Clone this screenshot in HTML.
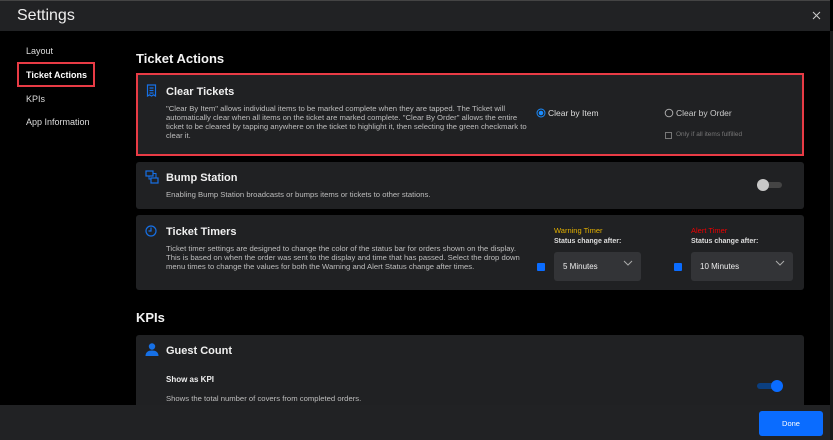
<!DOCTYPE html>
<html><head><meta charset="utf-8"><style>
*{margin:0;padding:0;box-sizing:border-box}
body{width:833px;height:440px;background:#000;font-family:"Liberation Sans",sans-serif;color:#e8e8e8;position:relative;overflow:hidden}
.abs{position:absolute}
.hdr{left:0;top:0;width:830px;height:31px;background:#212224;border-top:1px solid #444}
.hdr .t{left:17px;top:6px;font-size:16px;color:#eee}
.side{font-size:9px;color:#ddd}
.card{background:#202123;border-radius:3px;left:136px;width:668px}
h3{font-size:11px;font-weight:bold;color:#f0f0f0}
.desc{font-size:7.7px;line-height:9px;color:#bdbdbd;white-space:nowrap}
.sel{background:#333437;border-radius:3px;height:29px;font-size:8px;color:#eee;padding:10px 0 0 9px}
.chev{position:absolute;right:8px;top:8px}
.cb{width:8px;height:8px;background:#0a6cff;border-radius:1px}
</style></head><body>
<div class="abs hdr"><div class="abs t">Settings</div>
<svg class="abs" style="left:812px;top:10px" width="9" height="9"><path d="M1 1L8 8M8 1L1 8" stroke="#ccc" stroke-width="1"/></svg></div>
<div class="abs" style="left:830px;top:31px;width:3px;height:409px;background:#1a1a1a"></div>

<div class="abs side" style="left:26px;top:46px">Layout</div>
<div class="abs" style="left:17px;top:62px;width:78px;height:25px;border:2px solid #e83b45"></div>
<div class="abs side" style="left:26px;top:70px;color:#fff;font-weight:bold">Ticket Actions</div>
<div class="abs side" style="left:26px;top:94px">KPIs</div>
<div class="abs side" style="left:26px;top:117px">App Information</div>

<div class="abs" style="left:136px;top:51px;font-size:13px;font-weight:bold;color:#f2f2f2">Ticket Actions</div>

<div class="abs card" style="top:73px;height:83px;border:2px solid #e83b45;border-radius:0"></div>
<svg class="abs" style="left:146px;top:84px" width="11" height="13"><path d="M1.5 1h8v11l-2-1.2-2 1.2-2-1.2-2 1.2z M3.5 4h4M3.5 6.5h4M3.5 9h4" stroke="#1670e6" stroke-width="1.2" fill="none"/></svg>
<h3 class="abs" style="left:166px;top:86px">Clear Tickets</h3>
<div class="abs desc" style="left:166px;top:104px">"Clear By Item" allows individual items to be marked complete when they are tapped. The Ticket will<br>automatically clear when all items on the ticket are marked complete. "Clear By Order" allows the entire<br>ticket to be cleared by tapping anywhere on the ticket to highlight it, then selecting the green checkmark to<br>clear it.</div>
<svg class="abs" style="left:536px;top:108px" width="10" height="10"><circle cx="5" cy="5" r="4" stroke="#1a8cff" fill="none"/><circle cx="5" cy="5" r="2.3" fill="#1a8cff"/></svg>
<div class="abs" style="left:548px;top:108px;font-size:8.5px;color:#ddd">Clear by Item</div>
<svg class="abs" style="left:664px;top:108px" width="10" height="10"><circle cx="5" cy="5" r="3.8" stroke="#aaa" fill="none"/></svg>
<div class="abs" style="left:676px;top:108px;font-size:8.5px;color:#ccc">Clear by Order</div>
<div class="abs" style="left:665px;top:132px;width:7px;height:7px;border:1px solid #777"></div>
<div class="abs" style="left:676px;top:131px;font-size:6.5px;color:#777">Only if all items fulfilled</div>

<div class="abs card" style="top:162px;height:47px"></div>
<svg class="abs" style="left:145px;top:170px" width="14" height="14"><rect x="1" y="1" width="7" height="5" stroke="#1670e6" fill="none" stroke-width="1.2"/><rect x="6" y="8" width="7" height="5" stroke="#1670e6" fill="none" stroke-width="1.2"/><path d="M4 6v3h2M8 3.5h3v4" stroke="#1670e6" fill="none"/></svg>
<h3 class="abs" style="left:166px;top:172px">Bump Station</h3>
<div class="abs desc" style="left:166px;top:190px">Enabling Bump Station broadcasts or bumps items or tickets to other stations.</div>
<div class="abs" style="left:762px;top:182px;width:20px;height:6px;border-radius:3px;background:#444"></div>
<div class="abs" style="left:757px;top:179px;width:12px;height:12px;border-radius:6px;background:#c8c8c8"></div>

<div class="abs card" style="top:215px;height:75px"></div>
<svg class="abs" style="left:145px;top:225px" width="12" height="12"><circle cx="6" cy="6" r="5" stroke="#1670e6" fill="none" stroke-width="1.2"/><path d="M6 2.5V6H3.5" stroke="#1670e6" fill="none" stroke-width="1.2"/></svg>
<h3 class="abs" style="left:166px;top:226px">Ticket Timers</h3>
<div class="abs desc" style="left:166px;top:244px">Ticket timer settings are designed to change the color of the status bar for orders shown on the display.<br>This is based on when the order was sent to the display and time that has passed. Select the drop down<br>menu times to change the values for both the Warning and Alert Status change after times.</div>
<div class="abs" style="left:554px;top:226px;font-size:7.5px;color:#e3b100">Warning Timer</div>
<div class="abs" style="left:554px;top:238px;font-size:7px;color:#ddd;font-weight:bold">Status change after:</div>
<div class="abs cb" style="left:537px;top:263px"></div>
<div class="abs sel" style="left:554px;top:252px;width:87px">5 Minutes<svg class="chev" width="10" height="7"><path d="M1 1l4 4 4-4" stroke="#aaa" fill="none"/></svg></div>
<div class="abs" style="left:691px;top:226px;font-size:7.5px;color:#e00">Alert Timer</div>
<div class="abs" style="left:691px;top:238px;font-size:7px;color:#ddd;font-weight:bold">Status change after:</div>
<div class="abs cb" style="left:674px;top:263px"></div>
<div class="abs sel" style="left:691px;top:252px;width:102px">10 Minutes<svg class="chev" width="10" height="7"><path d="M1 1l4 4 4-4" stroke="#aaa" fill="none"/></svg></div>

<div class="abs" style="left:136px;top:310px;font-size:13px;font-weight:bold;color:#f2f2f2">KPIs</div>
<div class="abs card" style="top:335px;height:75px"></div>
<svg class="abs" style="left:145px;top:343px" width="14" height="13"><circle cx="7" cy="3.5" r="3.2" fill="#1670e6"/><path d="M0.5 13c0-4 3-5.5 6.5-5.5s6.5 1.5 6.5 5.5z" fill="#1670e6"/></svg>
<h3 class="abs" style="left:166px;top:345px">Guest Count</h3>
<div class="abs" style="left:166px;top:375px;font-size:8px;font-weight:bold;color:#eee">Show as KPI</div>
<div class="abs desc" style="left:166px;top:394px">Shows the total number of covers from completed orders.</div>
<div class="abs" style="left:757px;top:383px;width:20px;height:6px;border-radius:3px;background:#0b3f80"></div>
<div class="abs" style="left:771px;top:380px;width:12px;height:12px;border-radius:6px;background:#0a6cff"></div>

<div class="abs" style="left:0;top:405px;width:830px;height:35px;background:#212224"></div>
<div class="abs" style="left:759px;top:411px;width:64px;height:25px;background:#0a6cff;border-radius:3px;font-size:7.5px;color:#fff;text-align:center;line-height:25px">Done</div>
</body></html>
